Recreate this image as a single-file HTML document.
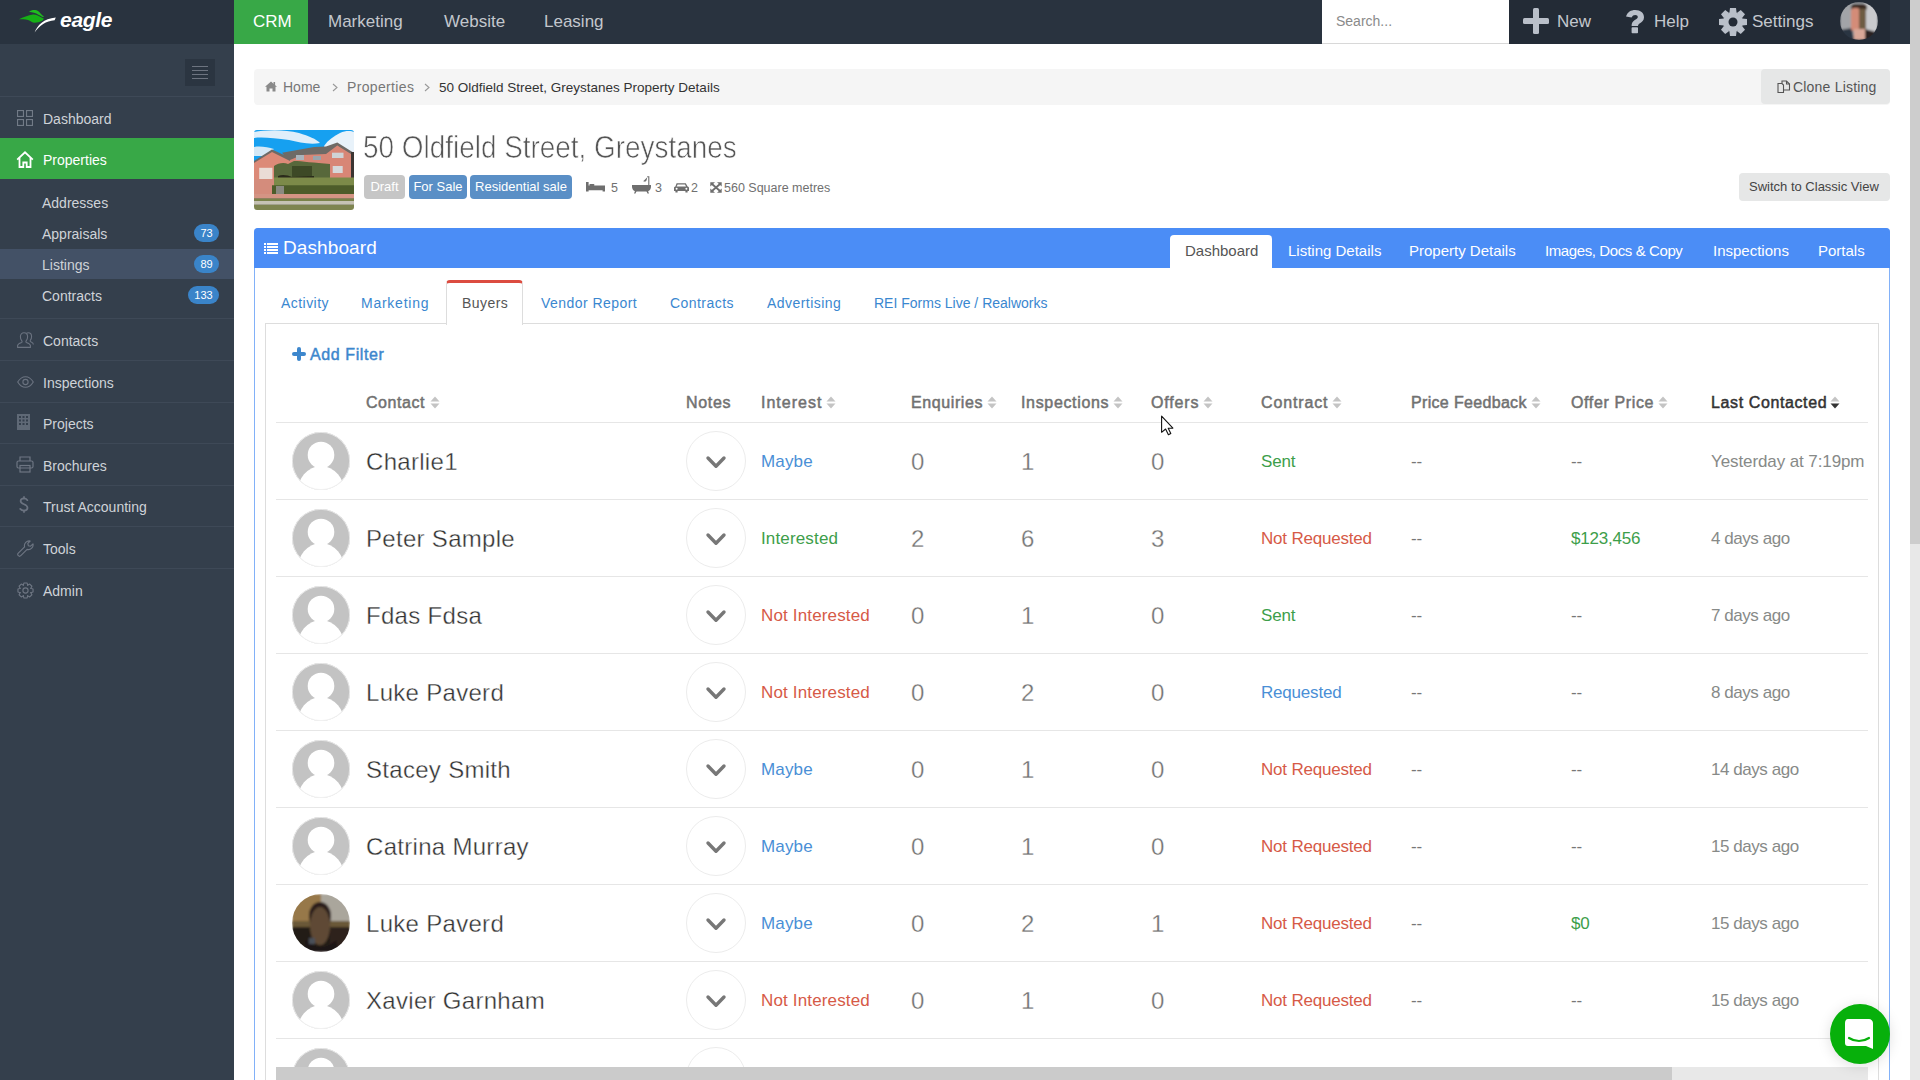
<!DOCTYPE html>
<html><head><meta charset="utf-8">
<style>
*{box-sizing:border-box;margin:0;padding:0}
html,body{width:1920px;height:1080px;overflow:hidden;background:#fff;font-family:"Liberation Sans",sans-serif;}
.a{position:absolute;white-space:nowrap}
.tnav{position:absolute;top:0;height:44px;line-height:44px;font-size:17px;color:#c3c7cd;white-space:nowrap}
.sitem{position:absolute;margin-top:1.5px;left:43px;font-size:14px;color:#cfd3d8;white-space:nowrap;line-height:16px}
.sub{left:42px}
.sep{position:absolute;left:0;width:234px;height:1px;background:#3e4957}
.badge{position:absolute;height:18px;border-radius:9px;background:#3a84c9;color:#fff;font-size:11px;line-height:18px;text-align:center}
.ico{position:absolute;left:17px}

/*X*/
.bc{font-size:14px;line-height:17px}
.lbl{top:175px;height:24px;border-radius:4px;color:#fff;font-size:13px;line-height:24px;text-align:center}
.meta{top:181px;font-size:12.5px;color:#707070;line-height:14px}
.ptab{top:242px;font-size:15px;color:#fff;line-height:18px}
.stab{top:295px;font-size:14px;color:#3a87d0;line-height:17px;letter-spacing:0.45px}
.th{top:393px;font-size:16px;line-height:19px;letter-spacing:0.5px;-webkit-text-stroke:0.5px currentColor}
.nm{font-size:24px;color:#333;line-height:28px;letter-spacing:0.3px;-webkit-text-stroke:0.35px #fff}
.num{font-size:24px;color:#737373;line-height:28px;-webkit-text-stroke:0.3px #fff}
.tx{font-size:17px;line-height:20px;letter-spacing:-0.2px}
</style></head><body>
<!-- TOP BAR -->
<div class="a" style="left:0;top:0;width:1910px;height:44px;background:#29333f"></div>
<svg class="a" style="left:15px;top:6px" width="44" height="30" viewBox="0 0 44 30">
  <path d="M4 13.2 C8 11.5 13 9 18 8.5 C21 8.2 24 10 26.5 11.5 L29 12.8 L27.5 14.5 C25 15.8 22 16.8 19.5 16.8 C17.5 16.8 15.5 15 13 14 C10 13 6 13.5 4 13.2 Z" fill="#16b016"/>
  <path d="M14 5.5 C16 4 19 3.6 21.5 4.2 C23.5 4.8 25.5 7.5 27.5 9.5 L29.2 10.5 L27.5 11 C25 9.5 22 7.8 19 6.8 C17.5 6.3 15.5 6.2 14 5.5 Z" fill="#1fbd1f"/>
  <path d="M19.6 26.5 C22.5 19.5 28.5 12.6 40.8 11.6 L39.6 14.3 C31 14.8 24.5 19.8 19.6 26.5 Z" fill="#fff"/>
</svg>
<div class="a" style="left:60px;top:7px;font-size:21px;font-weight:bold;font-style:italic;color:#fff;line-height:26px;letter-spacing:-0.3px">eagle</div>

<div class="a" style="left:234px;top:0;width:74px;height:44px;background:#38a847"></div>
<div class="tnav" style="left:253px;color:#fff">CRM</div>
<div class="tnav" style="left:328px">Marketing</div>
<div class="tnav" style="left:444px">Website</div>
<div class="tnav" style="left:544px">Leasing</div>

<div class="a" style="left:1322px;top:0;width:187px;height:44px;background:#fff;border-bottom:1px solid #d8d8d8"></div>
<div class="a" style="left:1336px;top:0;height:43px;line-height:42px;font-size:14px;color:#8a8a8a">Search...</div>
<div class="a" style="left:1509px;top:0;width:381px;height:44px;background:#232b36"></div>
<!-- plus -->
<div class="a" style="left:1523px;top:18px;width:26px;height:6px;background:#b9bfc9;border-radius:1.5px"></div>
<div class="a" style="left:1533px;top:8px;width:6px;height:26px;background:#b9bfc9;border-radius:1.5px"></div>
<div class="tnav" style="left:1557px">New</div>
<svg class="a" style="left:1626px;top:10px" width="18" height="24" viewBox="0 0 18 24" fill="#b9bfc9"><path d="M0 6.5 C1.5 2 5 0 9.2 0 C14.5 0 18 3 18 7.2 C18 10.5 15.8 12 14 13.2 C12.8 14 12 14.6 12 16 H5.6 C5.6 13 6.5 11.5 8.8 10 C10.8 8.7 11.8 8.2 11.8 7 C11.8 5.8 10.8 5 9.2 5 C7.6 5 6.5 5.8 5.5 7.6 Z"/><rect x="5.6" y="17.2" width="6.4" height="6" rx="0.8"/></svg>
<div class="tnav" style="left:1654px">Help</div>
<svg class="a" style="left:1718px;top:7px" width="30" height="30" viewBox="0 0 30 30">
  <g fill="#b9bfc9" transform="translate(15 15)">
    <circle r="10"/>
    <path transform="rotate(0)" d="M-3.6 -9 L-3 -14 H3 L3.6 -9 Z"/><path transform="rotate(45)" d="M-3.6 -9 L-3 -14 H3 L3.6 -9 Z"/><path transform="rotate(90)" d="M-3.6 -9 L-3 -14 H3 L3.6 -9 Z"/><path transform="rotate(135)" d="M-3.6 -9 L-3 -14 H3 L3.6 -9 Z"/><path transform="rotate(180)" d="M-3.6 -9 L-3 -14 H3 L3.6 -9 Z"/><path transform="rotate(225)" d="M-3.6 -9 L-3 -14 H3 L3.6 -9 Z"/><path transform="rotate(270)" d="M-3.6 -9 L-3 -14 H3 L3.6 -9 Z"/><path transform="rotate(315)" d="M-3.6 -9 L-3 -14 H3 L3.6 -9 Z"/>
  </g>
  <circle cx="15" cy="15" r="4.5" fill="#232b36"/>
</svg>
<div class="tnav" style="left:1752px">Settings</div>
<svg class="a" style="left:1840px;top:2px" width="38" height="38" viewBox="0 0 38 38">
  <defs><clipPath id="av"><circle cx="19" cy="19" r="19"/></clipPath><filter id="bl1" x="-10%" y="-10%" width="120%" height="120%"><feGaussianBlur stdDeviation="0.9"/></filter></defs>
  <g clip-path="url(#av)"><g filter="url(#bl1)">
    <rect width="38" height="38" fill="#a2a4a8"/>
    <rect x="24" y="0" width="14" height="30" fill="#c9cacd"/>
    <path d="M0 28 L12 26 L14 38 H0 Z" fill="#2c3542"/>
    <path d="M25 27 L36 30 L38 38 H24 Z" fill="#2a2224"/>
    <rect x="11" y="2" width="16" height="7" rx="4" fill="#3a2a22"/>
    <rect x="11" y="6" width="9" height="23" rx="3" fill="#d48c78"/>
    <rect x="19" y="7" width="7" height="21" fill="#6e5c42"/>
    <rect x="14" y="27" width="11" height="11" fill="#d9a898"/>
  </g></g>
</svg>

<!-- SIDEBAR -->
<div class="a" style="left:0;top:44px;width:234px;height:1036px;background:#343f4c"></div>
<div class="a" style="left:185px;top:59px;width:30px;height:27px;background:#2b3541"></div>
<div class="a" style="left:192px;top:66px;width:16px;height:1px;background:#6d7480"></div>
<div class="a" style="left:192px;top:70px;width:16px;height:1px;background:#6d7480"></div>
<div class="a" style="left:192px;top:74px;width:16px;height:1px;background:#6d7480"></div>
<div class="a" style="left:192px;top:78px;width:16px;height:1px;background:#6d7480"></div>
<div class="sep" style="top:96px"></div>

<!-- dashboard icon -->
<svg class="a" style="left:17px;top:110px" width="16" height="16" viewBox="0 0 16 16" fill="none" stroke="#727b87" stroke-width="1.1">
  <rect x="0.55" y="0.55" width="5.9" height="5.9"/><rect x="9.55" y="0.55" width="5.9" height="5.9"/>
  <rect x="0.55" y="9.55" width="5.9" height="5.9"/><rect x="9.55" y="9.55" width="5.9" height="5.9"/>
</svg>
<div class="sitem" style="top:109px">Dashboard</div>

<div class="a" style="left:0;top:138px;width:234px;height:41px;background:#38a847"></div>
<svg class="a" style="left:16px;top:151px" width="18" height="17" viewBox="0 0 18 17" fill="none" stroke="#fff" stroke-width="1.8" stroke-linejoin="miter">
  <path d="M1.2 8.6 L9 1.3 L16.8 8.6"/><path d="M3.5 6.8 V16 H7.3 V11.5 H10.7 V16 H14.5 V6.8"/>
</svg>
<div class="sitem" style="top:150px;color:#fff">Properties</div>

<div class="sitem sub" style="top:193px">Addresses</div>
<div class="sitem sub" style="top:224px">Appraisals</div>
<div class="badge" style="left:194px;top:224px;width:25px">73</div>
<div class="a" style="left:0;top:249px;width:234px;height:30px;background:#435166"></div>
<div class="sitem sub" style="top:255px">Listings</div>
<div class="badge" style="left:194px;top:255px;width:25px">89</div>
<div class="sitem sub" style="top:286px">Contracts</div>
<div class="badge" style="left:188px;top:286px;width:31px">133</div>
<div class="sep" style="top:318px"></div>

<!-- contacts -->
<svg class="a" style="left:17px;top:332px" width="17" height="16" viewBox="0 0 17 16" fill="none" stroke="#6b7380" stroke-width="1.1" stroke-linejoin="round">
  <path d="M0.6 15.4 V13.6 C0.6 12 2.5 11.2 4.6 10.4 C5.2 10.1 5.2 9.3 4.7 8.6 C3.8 7.6 3.4 6.2 3.4 4.8 C3.4 2.3 5 0.7 7 0.7 C9 0.7 10.6 2.3 10.6 4.8 C10.6 6.2 10.2 7.6 9.3 8.6 C8.8 9.3 8.8 10.1 9.4 10.4 C11.5 11.2 13.4 12 13.4 13.6 V15.4 Z"/>
  <path d="M9.5 1.2 C10 0.9 10.6 0.7 11.2 0.7 C13.2 0.7 14.6 2.3 14.6 4.6 C14.6 6 14.2 7.2 13.4 8.2 C13 8.8 13.2 9.5 13.8 9.8 C15.4 10.5 16.4 11.2 16.4 12.6"/>
</svg>
<div class="sitem" style="top:331px">Contacts</div>
<div class="sep" style="top:360px"></div>
<svg class="a" style="left:17px;top:376px" width="17" height="12" viewBox="0 0 17 12" fill="none" stroke="#6b7380" stroke-width="1.1">
  <path d="M0.7 6 C3 2.2 5.6 0.7 8.5 0.7 C11.4 0.7 14 2.2 16.3 6 C14 9.8 11.4 11.3 8.5 11.3 C5.6 11.3 3 9.8 0.7 6 Z"/><circle cx="8.5" cy="6" r="2.6"/>
</svg>
<div class="sitem" style="top:373px">Inspections</div>
<div class="sep" style="top:402px"></div>
<svg class="a" style="left:17px;top:414px" width="13" height="16" viewBox="0 0 13 16">
  <rect x="0" y="0" width="13" height="16" fill="#5f6976"/>
  <g fill="#343f4c"><rect x="2" y="2" width="2" height="2"/><rect x="5.5" y="2" width="2" height="2"/><rect x="9" y="2" width="2" height="2"/>
  <rect x="2" y="5.5" width="2" height="2"/><rect x="5.5" y="5.5" width="2" height="2"/><rect x="9" y="5.5" width="2" height="2"/>
  <rect x="2" y="9" width="2" height="2"/><rect x="5.5" y="9" width="2" height="2"/><rect x="9" y="9" width="2" height="2"/></g>
</svg>
<div class="sitem" style="top:414px">Projects</div>
<div class="sep" style="top:443px"></div>
<svg class="a" style="left:16px;top:456px" width="18" height="17" viewBox="0 0 18 17" fill="none" stroke="#6e7683" stroke-width="1.2">
  <path d="M4 5 V1 H14 V5"/><rect x="1" y="5" width="16" height="7" rx="1.5"/><rect x="4" y="9.5" width="10" height="6.5"/>
</svg>
<div class="sitem" style="top:456px">Brochures</div>
<div class="sep" style="top:485px"></div>
<svg class="a" style="left:19px;top:496px" width="10" height="17" viewBox="0 0 10 17" fill="none" stroke="#6b7380" stroke-width="1.7" stroke-linecap="round"><path d="M8.4 4.2 C7.5 3 6.4 2.4 5 2.4 C3 2.4 1.6 3.4 1.6 5.1 C1.6 6.9 3.1 7.6 5 8.3 C7 9.1 8.5 9.8 8.5 11.8 C8.5 13.5 7 14.6 5 14.6 C3.4 14.6 2.1 14 1.2 12.9"/><path d="M5 0.9 V2.4 M5 14.6 V16.1"/></svg>
<div class="sitem" style="top:497px">Trust Accounting</div>
<div class="sep" style="top:526px"></div>
<svg class="a" style="left:17px;top:540px" width="17" height="17" viewBox="0 0 17 17" fill="none" stroke="#6e7683" stroke-width="1.1" stroke-linejoin="round">
  <path d="M1.3 13.2 L7.6 6.9 C7.2 5.5 7.5 3.6 8.8 2.3 C10 1.1 11.7 0.7 13.2 1 L10.8 3.4 L11.3 5.7 L13.6 6.2 L16 3.8 C16.3 5.3 15.9 7 14.7 8.2 C13.4 9.5 11.5 9.8 10.1 9.4 L3.8 15.7 C3.1 16.4 2 16.4 1.3 15.7 C0.6 15 0.6 13.9 1.3 13.2 Z"/>
</svg>
<div class="sitem" style="top:539px">Tools</div>
<div class="sep" style="top:568px"></div>
<svg class="a" style="left:17px;top:582px" width="17" height="17" viewBox="-8.5 -8.5 17 17" fill="none" stroke="#6e7683" stroke-width="1.1" stroke-linejoin="round">
  <circle r="2.6"/><path d="M-2.28 -5.11 L-1.53 -7.55 L1.53 -7.55 L2.28 -5.11 L2.00 -5.23 L4.25 -6.42 L6.42 -4.25 L5.23 -2.00 L5.11 -2.28 L7.55 -1.53 L7.55 1.53 L5.11 2.28 L5.23 2.00 L6.42 4.25 L4.25 6.42 L2.00 5.23 L2.28 5.11 L1.53 7.55 L-1.53 7.55 L-2.28 5.11 L-2.00 5.23 L-4.25 6.42 L-6.42 4.25 L-5.23 2.00 L-5.11 2.28 L-7.55 1.53 L-7.55 -1.53 L-5.11 -2.28 L-5.23 -2.00 L-6.42 -4.25 L-4.25 -6.42 L-2.00 -5.23 Z"/>
</svg>
<div class="sitem" style="top:581px">Admin</div>


<!-- MAIN -->
<!-- breadcrumb -->
<div class="a" style="left:254px;top:69px;width:1636px;height:36px;background:#f5f5f5;border-radius:4px"></div>
<svg class="a" style="left:265px;top:81px" width="12" height="11" viewBox="0 0 12 11"><path d="M6 0.5 L0 5.8 L1.5 5.8 L1.5 10.5 L4.5 10.5 L4.5 7.5 L7.5 7.5 L7.5 10.5 L10.5 10.5 L10.5 5.8 L12 5.8 Z" fill="#8a8a8a"/><rect x="8.5" y="1" width="1.6" height="3" fill="#8a8a8a"/></svg>
<div class="a bc" style="left:283px;top:79px;color:#777">Home</div>
<svg class="a" style="left:332px;top:83px" width="6" height="9" viewBox="0 0 6 9"><path d="M1 1 L5 4.5 L1 8" fill="none" stroke="#999" stroke-width="1.1"/></svg>
<div class="a bc" style="left:347px;top:79px;color:#777;letter-spacing:0.35px">Properties</div>
<svg class="a" style="left:424px;top:83px" width="6" height="9" viewBox="0 0 6 9"><path d="M1 1 L5 4.5 L1 8" fill="none" stroke="#999" stroke-width="1.1"/></svg>
<div class="a bc" style="left:439px;top:79px;color:#333;font-size:13.5px">50 Oldfield Street, Greystanes Property Details</div>
<div class="a" style="left:1761px;top:69px;width:129px;height:35px;background:#e6e7e7;border-radius:4px"></div>
<svg class="a" style="left:1777px;top:80px" width="14" height="14" viewBox="0 0 14 14" fill="none" stroke="#555" stroke-width="1.1"><path d="M1 3.5 H5 L6.5 5 V12.5 H1 Z"/><path d="M5 3.5 V1 H9.5 L12.5 4 V10 H6.5"/><path d="M9.5 1 V4 H12.5"/></svg>
<div class="a" style="left:1793px;top:79px;font-size:14px;color:#555;line-height:17px;letter-spacing:0.2px">Clone Listing</div>

<!-- property header -->
<svg class="a" style="left:254px;top:130px" width="100" height="80" viewBox="0 0 100 80">
  <defs><clipPath id="ph"><rect width="100" height="80" rx="3"/></clipPath><filter id="bl3" x="-5%" y="-5%" width="110%" height="110%"><feGaussianBlur stdDeviation="0.5"/></filter></defs>
  <g clip-path="url(#ph)"><g filter="url(#bl3)">
  <rect width="100" height="80" fill="#16a0f0"/>
  <path d="M0 2 C10 0 30 -1 45 3 C55 6 62 9 66 13 C55 15 45 12 35 10 C20 8 8 7 0 8 Z" fill="#dfeefa"/>
  <path d="M70 16 C74 10 80 6 86 3 C92 0 98 1 100 2 V25 H72 Z" fill="#e8f2fa"/>
  <path d="M0 17 C6 16 14 17 20 19 L10 26 H0 Z" fill="#d4e8f6"/>
  <path d="M0 31 L18 19.6 L30 25 L28 22.7 L60 17 L72 16.5 L83.3 12.6 L100 23 V80 H0 Z" fill="#6e6a66"/>
  <path d="M0 33 L18 22 L40 33 V60 H0 Z" fill="#dc8a78"/>
  <path d="M36 30 L48 25 L72 24 L83.3 15.5 L97 24 V60 H36 Z" fill="#d88676"/>
  <rect x="97" y="22" width="3" height="40" fill="#3a3530"/>
  <rect x="78" y="22.7" width="11.5" height="5.3" fill="#cfd3d6"/>
  <rect x="78.7" y="36" width="10" height="7" fill="#d6d8da"/>
  <rect x="42" y="25" width="8" height="5" fill="#aab4bc"/>
  <rect x="59" y="26" width="8" height="4" fill="#9aa4ac"/>
  <rect x="5.2" y="37.8" width="13.2" height="11.2" fill="#eadcd6"/>
  <path d="M20 36 C24 33 30 32 34 34 L40 31 C48 31 60 33 76 34 L76 48 H20 Z" fill="#58683a"/>
  <path d="M38 36 H58 V48 H38 Z" fill="#3e4a26"/>
  <path d="M24 46 C28 44 34 45 38 47 L60 46 V50 H24 Z" fill="#2a2a1a"/>
  <path d="M20 47.6 H100 V57 H20 Z" fill="#7c8a4a"/>
  <path d="M0 49 H20 V64 H0 Z" fill="#d48c7c"/>
  <path d="M18 55.3 H100 V64 H18 Z" fill="#4e5c2a"/>
  <rect x="22" y="56" width="8" height="8" fill="#8a8a80"/>
  <path d="M0 64 H100 V68.6 H0 Z" fill="#d49484"/>
  <path d="M0 68.6 H100 V71 H0 Z" fill="#7a8248"/>
  <path d="M0 71 H100 V74.8 H0 Z" fill="#c6c2b4"/>
  <path d="M0 74.8 H100 V80 H0 Z" fill="#7e8450"/>
  </g>
</svg>
<div class="a" style="left:363px;top:128px;font-size:32px;color:#555;line-height:38px;letter-spacing:0px;transform:scaleX(0.872);transform-origin:0 0;-webkit-text-stroke:0.7px #fff">50 Oldfield Street, Greystanes</div>
<div class="a lbl" style="left:364px;width:41px;background:#c6c6c6">Draft</div>
<div class="a lbl" style="left:409px;width:58px;background:#5a8fc6">For Sale</div>
<div class="a lbl" style="left:470px;width:102px;background:#5a8fc6">Residential sale</div>
<!-- bed -->
<svg class="a" style="left:586px;top:182px" width="19" height="10" viewBox="0 0 19 10" fill="#6e6e6e"><path d="M0 0 H2.6 V3.6 H19 V9.6 H16.6 V8.2 H2.6 V9.6 H0 Z"/><rect x="3.4" y="2" width="5" height="2" rx="0.8"/></svg>
<div class="a meta" style="left:611px">5</div>
<svg class="a" style="left:632px;top:176px" width="20" height="18" viewBox="0 0 20 18" fill="#6e6e6e"><path d="M0 9 H19 V10.5 C19 13.5 17 15.5 14 15.5 H5 C2 15.5 0 13.5 0 10.5 Z"/><path d="M3 15 L2 17.5 H3.5 L4.6 15 Z M16 15 L17 17.5 H15.5 L14.4 15 Z"/><path d="M16.8 9 V0.8 H15.2" fill="none" stroke="#6e6e6e" stroke-width="1.1"/><path d="M15.3 1.2 L11.2 5.3 L13.2 5.8 L14.5 4.5 Z"/></svg>
<div class="a meta" style="left:655px">3</div>
<svg class="a" style="left:674px;top:183px" width="15" height="10" viewBox="0 0 15 10" fill="#6e6e6e"><path d="M2.6 0.3 H11.8 L13.6 3.6 C14.5 3.8 15 4.4 15 5.2 V8 H13.6 V9.6 H11.4 V8 H3.6 V9.6 H1.4 V8 H0 V5.2 C0 4.4 0.5 3.8 1.4 3.6 Z"/><path d="M3.6 1.6 H11 L12 3.6 H2.6 Z" fill="#fff"/><circle cx="2.6" cy="5.8" r="1" fill="#fff"/><circle cx="12.4" cy="5.8" r="1" fill="#fff"/></svg>
<div class="a meta" style="left:691px">2</div>
<svg class="a" style="left:710px;top:182px" width="12" height="11" viewBox="0 0 12 11" fill="#6e6e6e"><path d="M2 2 L10 9 M10 2 L2 9" stroke="#6e6e6e" stroke-width="1.8"/><path d="M0.3 0.3 H5 L0.3 4.5 Z M11.7 0.3 H7 L11.7 4.5 Z M0.3 10.7 H5 L0.3 6.5 Z M11.7 10.7 H7 L11.7 6.5 Z"/></svg>
<div class="a meta" style="left:724px">560 Square metres</div>
<div class="a" style="left:1739px;top:173px;width:151px;height:28px;background:#e6e7e7;border-radius:4px"></div>
<div class="a" style="left:1749px;top:179px;font-size:13px;color:#444;line-height:16px">Switch to Classic View</div><path d="M0 74.8 H100 V80 H0Z" fill="#7e8450"/>
  </g>
<!-- dashboard panel -->
<div class="a" style="left:254px;top:228px;width:1636px;height:860px;border:1px solid #82b1f8;border-radius:4px 4px 0 0"></div>
<div class="a" style="left:254px;top:228px;width:1636px;height:40px;background:#4b8df6;border-radius:4px 4px 0 0"></div>
<svg class="a" style="left:264px;top:243px" width="14" height="11" viewBox="0 0 14 11" fill="#fff"><rect x="0" y="0" width="2" height="2"/><rect x="3" y="0" width="11" height="2"/><rect x="0" y="3" width="2" height="2"/><rect x="3" y="3" width="11" height="2"/><rect x="0" y="6" width="2" height="2"/><rect x="3" y="6" width="11" height="2"/><rect x="0" y="9" width="2" height="2"/><rect x="3" y="9" width="11" height="2"/></svg>
<div class="a" style="left:283px;top:237px;font-size:19px;color:#fff;line-height:22px;letter-spacing:0.1px">Dashboard</div>
<div class="a" style="left:1170px;top:235px;width:102px;height:33px;background:#fff;border-radius:4px 4px 0 0"></div>
<div class="a ptab" style="left:1185px;color:#555">Dashboard</div>
<div class="a ptab" style="left:1288px">Listing Details</div>
<div class="a ptab" style="left:1409px">Property Details</div>
<div class="a ptab" style="left:1545px;letter-spacing:-0.4px">Images, Docs &amp; Copy</div>
<div class="a ptab" style="left:1713px">Inspections</div>
<div class="a ptab" style="left:1818px">Portals</div>

<!-- sub tabs -->
<div class="a" style="left:265px;top:323px;width:1614px;height:800px;border:1px solid #ddd"></div>
<div class="a" style="left:446px;top:280px;width:77px;height:45px;background:#fff;border:1px solid #ddd;border-bottom:none;border-top:3px solid #dc4c40;border-radius:4px 4px 0 0"></div>
<div class="a stab" style="left:281px">Activity</div>
<div class="a stab" style="left:361px;letter-spacing:0.75px">Marketing</div>
<div class="a stab" style="left:462px;color:#555">Buyers</div>
<div class="a stab" style="left:541px">Vendor Report</div>
<div class="a stab" style="left:670px">Contracts</div>
<div class="a stab" style="left:767px">Advertising</div>
<div class="a stab" style="left:874px;letter-spacing:0">REI Forms Live / Realworks</div>

<!-- add filter -->
<div class="a" style="left:292px;top:352px;width:14px;height:4px;background:#3d87cd;border-radius:2px"></div>
<div class="a" style="left:297px;top:347px;width:4px;height:14px;background:#3d87cd;border-radius:2px"></div>
<div class="a" style="left:310px;top:345px;font-size:16px;color:#3d87cd;line-height:19px;letter-spacing:0.6px;-webkit-text-stroke:0.45px #3d87cd">Add Filter</div>
<div class="a th" style="left:366px;color:#717171;letter-spacing:0.56px">Contact</div>
<svg class="a" style="left:430px;top:396px" width="10" height="13" viewBox="0 0 10 13"><path d="M5 0.5 L9.5 5.5 H0.5 Z" fill="#c4c4c4"/><path d="M0.5 7.5 H9.5 L5 12.5 Z" fill="#c4c4c4"/></svg>
<div class="a th" style="left:686px;color:#717171;letter-spacing:0.68px">Notes</div>
<div class="a th" style="left:761px;color:#717171;letter-spacing:1.0px">Interest</div>
<svg class="a" style="left:826px;top:396px" width="10" height="13" viewBox="0 0 10 13"><path d="M5 0.5 L9.5 5.5 H0.5 Z" fill="#c4c4c4"/><path d="M0.5 7.5 H9.5 L5 12.5 Z" fill="#c4c4c4"/></svg>
<div class="a th" style="left:911px;color:#717171;letter-spacing:0.6px">Enquiries</div>
<svg class="a" style="left:987px;top:396px" width="10" height="13" viewBox="0 0 10 13"><path d="M5 0.5 L9.5 5.5 H0.5 Z" fill="#c4c4c4"/><path d="M0.5 7.5 H9.5 L5 12.5 Z" fill="#c4c4c4"/></svg>
<div class="a th" style="left:1021px;color:#717171;letter-spacing:0.66px">Inspections</div>
<svg class="a" style="left:1113px;top:396px" width="10" height="13" viewBox="0 0 10 13"><path d="M5 0.5 L9.5 5.5 H0.5 Z" fill="#c4c4c4"/><path d="M0.5 7.5 H9.5 L5 12.5 Z" fill="#c4c4c4"/></svg>
<div class="a th" style="left:1151px;color:#717171;letter-spacing:0.84px">Offers</div>
<svg class="a" style="left:1203px;top:396px" width="10" height="13" viewBox="0 0 10 13"><path d="M5 0.5 L9.5 5.5 H0.5 Z" fill="#c4c4c4"/><path d="M0.5 7.5 H9.5 L5 12.5 Z" fill="#c4c4c4"/></svg>
<div class="a th" style="left:1261px;color:#717171;letter-spacing:0.86px">Contract</div>
<svg class="a" style="left:1332px;top:396px" width="10" height="13" viewBox="0 0 10 13"><path d="M5 0.5 L9.5 5.5 H0.5 Z" fill="#c4c4c4"/><path d="M0.5 7.5 H9.5 L5 12.5 Z" fill="#c4c4c4"/></svg>
<div class="a th" style="left:1411px;color:#717171;letter-spacing:0.33px">Price Feedback</div>
<svg class="a" style="left:1531px;top:396px" width="10" height="13" viewBox="0 0 10 13"><path d="M5 0.5 L9.5 5.5 H0.5 Z" fill="#c4c4c4"/><path d="M0.5 7.5 H9.5 L5 12.5 Z" fill="#c4c4c4"/></svg>
<div class="a th" style="left:1571px;color:#717171;letter-spacing:0.63px">Offer Price</div>
<svg class="a" style="left:1658px;top:396px" width="10" height="13" viewBox="0 0 10 13"><path d="M5 0.5 L9.5 5.5 H0.5 Z" fill="#c4c4c4"/><path d="M0.5 7.5 H9.5 L5 12.5 Z" fill="#c4c4c4"/></svg>
<div class="a th" style="left:1711px;color:#333;letter-spacing:0.61px">Last Contacted</div>
<svg class="a" style="left:1830px;top:396px" width="10" height="13" viewBox="0 0 10 13"><path d="M5 0.5 L9.5 5.5 H0.5 Z" fill="#c4c4c4"/><path d="M0.5 7.5 H9.5 L5 12.5 Z" fill="#333"/></svg>
<div class="a" style="left:276px;top:422px;width:1592px;height:1px;background:#e6e6e6"></div>
<svg class="a" style="left:292px;top:432px" width="58" height="58" viewBox="0 0 58 58"><defs><clipPath id="ac"><circle cx="29" cy="29" r="29"/></clipPath></defs><circle cx="29" cy="29" r="29" fill="#c3c3c3"/><g clip-path="url(#ac)"><circle cx="29" cy="23" r="13.3" fill="#fff"/><ellipse cx="29" cy="62" rx="24" ry="28" fill="#fff"/></g><circle cx="29" cy="29" r="28.6" fill="none" stroke="#eee" stroke-width="0.8"/></svg>
<div class="a nm" style="left:366px;top:448px">Charlie1</div>
<div class="a" style="left:686px;top:431px;width:60px;height:60px;border:1px solid #ececec;border-radius:50%"></div>
<svg class="a" style="left:705px;top:455px" width="22" height="14" viewBox="0 0 22 14"><path d="M3 3 L11 11.2 L19 3" fill="none" stroke="#777" stroke-width="3.4" stroke-linecap="round" stroke-linejoin="round"/></svg>
<div class="a tx" style="left:761px;top:452px;color:#4a8fd6;letter-spacing:0.15px">Maybe</div>
<div class="a num" style="left:911px;top:448px">0</div>
<div class="a num" style="left:1021px;top:448px">1</div>
<div class="a num" style="left:1151px;top:448px">0</div>
<div class="a tx" style="left:1261px;top:452px;color:#3d9e4a">Sent</div>
<div class="a tx" style="left:1411px;top:452px;color:#777">--</div>
<div class="a tx" style="left:1571px;top:452px;color:#777">--</div>
<div class="a tx" style="left:1711px;top:452px;color:#878a88;letter-spacing:-0.1px">Yesterday at 7:19pm</div>
<div class="a" style="left:276px;top:499px;width:1592px;height:1px;background:#e6e6e6"></div>
<svg class="a" style="left:292px;top:509px" width="58" height="58" viewBox="0 0 58 58"><defs><clipPath id="ac"><circle cx="29" cy="29" r="29"/></clipPath></defs><circle cx="29" cy="29" r="29" fill="#c3c3c3"/><g clip-path="url(#ac)"><circle cx="29" cy="23" r="13.3" fill="#fff"/><ellipse cx="29" cy="62" rx="24" ry="28" fill="#fff"/></g><circle cx="29" cy="29" r="28.6" fill="none" stroke="#eee" stroke-width="0.8"/></svg>
<div class="a nm" style="left:366px;top:525px">Peter Sample</div>
<div class="a" style="left:686px;top:508px;width:60px;height:60px;border:1px solid #ececec;border-radius:50%"></div>
<svg class="a" style="left:705px;top:532px" width="22" height="14" viewBox="0 0 22 14"><path d="M3 3 L11 11.2 L19 3" fill="none" stroke="#777" stroke-width="3.4" stroke-linecap="round" stroke-linejoin="round"/></svg>
<div class="a tx" style="left:761px;top:529px;color:#3d9e4a;letter-spacing:0.15px">Interested</div>
<div class="a num" style="left:911px;top:525px">2</div>
<div class="a num" style="left:1021px;top:525px">6</div>
<div class="a num" style="left:1151px;top:525px">3</div>
<div class="a tx" style="left:1261px;top:529px;color:#d65a47">Not Requested</div>
<div class="a tx" style="left:1411px;top:529px;color:#777">--</div>
<div class="a tx" style="left:1571px;top:529px;color:#3d9e4a">$123,456</div>
<div class="a tx" style="left:1711px;top:529px;color:#878a88;letter-spacing:-0.45px">4 days ago</div>
<div class="a" style="left:276px;top:576px;width:1592px;height:1px;background:#e6e6e6"></div>
<svg class="a" style="left:292px;top:586px" width="58" height="58" viewBox="0 0 58 58"><defs><clipPath id="ac"><circle cx="29" cy="29" r="29"/></clipPath></defs><circle cx="29" cy="29" r="29" fill="#c3c3c3"/><g clip-path="url(#ac)"><circle cx="29" cy="23" r="13.3" fill="#fff"/><ellipse cx="29" cy="62" rx="24" ry="28" fill="#fff"/></g><circle cx="29" cy="29" r="28.6" fill="none" stroke="#eee" stroke-width="0.8"/></svg>
<div class="a nm" style="left:366px;top:602px">Fdas Fdsa</div>
<div class="a" style="left:686px;top:585px;width:60px;height:60px;border:1px solid #ececec;border-radius:50%"></div>
<svg class="a" style="left:705px;top:609px" width="22" height="14" viewBox="0 0 22 14"><path d="M3 3 L11 11.2 L19 3" fill="none" stroke="#777" stroke-width="3.4" stroke-linecap="round" stroke-linejoin="round"/></svg>
<div class="a tx" style="left:761px;top:606px;color:#d65a47;letter-spacing:0.15px">Not Interested</div>
<div class="a num" style="left:911px;top:602px">0</div>
<div class="a num" style="left:1021px;top:602px">1</div>
<div class="a num" style="left:1151px;top:602px">0</div>
<div class="a tx" style="left:1261px;top:606px;color:#3d9e4a">Sent</div>
<div class="a tx" style="left:1411px;top:606px;color:#777">--</div>
<div class="a tx" style="left:1571px;top:606px;color:#777">--</div>
<div class="a tx" style="left:1711px;top:606px;color:#878a88;letter-spacing:-0.45px">7 days ago</div>
<div class="a" style="left:276px;top:653px;width:1592px;height:1px;background:#e6e6e6"></div>
<svg class="a" style="left:292px;top:663px" width="58" height="58" viewBox="0 0 58 58"><defs><clipPath id="ac"><circle cx="29" cy="29" r="29"/></clipPath></defs><circle cx="29" cy="29" r="29" fill="#c3c3c3"/><g clip-path="url(#ac)"><circle cx="29" cy="23" r="13.3" fill="#fff"/><ellipse cx="29" cy="62" rx="24" ry="28" fill="#fff"/></g><circle cx="29" cy="29" r="28.6" fill="none" stroke="#eee" stroke-width="0.8"/></svg>
<div class="a nm" style="left:366px;top:679px">Luke Paverd</div>
<div class="a" style="left:686px;top:662px;width:60px;height:60px;border:1px solid #ececec;border-radius:50%"></div>
<svg class="a" style="left:705px;top:686px" width="22" height="14" viewBox="0 0 22 14"><path d="M3 3 L11 11.2 L19 3" fill="none" stroke="#777" stroke-width="3.4" stroke-linecap="round" stroke-linejoin="round"/></svg>
<div class="a tx" style="left:761px;top:683px;color:#d65a47;letter-spacing:0.15px">Not Interested</div>
<div class="a num" style="left:911px;top:679px">0</div>
<div class="a num" style="left:1021px;top:679px">2</div>
<div class="a num" style="left:1151px;top:679px">0</div>
<div class="a tx" style="left:1261px;top:683px;color:#4a8fd6">Requested</div>
<div class="a tx" style="left:1411px;top:683px;color:#777">--</div>
<div class="a tx" style="left:1571px;top:683px;color:#777">--</div>
<div class="a tx" style="left:1711px;top:683px;color:#878a88;letter-spacing:-0.45px">8 days ago</div>
<div class="a" style="left:276px;top:730px;width:1592px;height:1px;background:#e6e6e6"></div>
<svg class="a" style="left:292px;top:740px" width="58" height="58" viewBox="0 0 58 58"><defs><clipPath id="ac"><circle cx="29" cy="29" r="29"/></clipPath></defs><circle cx="29" cy="29" r="29" fill="#c3c3c3"/><g clip-path="url(#ac)"><circle cx="29" cy="23" r="13.3" fill="#fff"/><ellipse cx="29" cy="62" rx="24" ry="28" fill="#fff"/></g><circle cx="29" cy="29" r="28.6" fill="none" stroke="#eee" stroke-width="0.8"/></svg>
<div class="a nm" style="left:366px;top:756px">Stacey Smith</div>
<div class="a" style="left:686px;top:739px;width:60px;height:60px;border:1px solid #ececec;border-radius:50%"></div>
<svg class="a" style="left:705px;top:763px" width="22" height="14" viewBox="0 0 22 14"><path d="M3 3 L11 11.2 L19 3" fill="none" stroke="#777" stroke-width="3.4" stroke-linecap="round" stroke-linejoin="round"/></svg>
<div class="a tx" style="left:761px;top:760px;color:#4a8fd6;letter-spacing:0.15px">Maybe</div>
<div class="a num" style="left:911px;top:756px">0</div>
<div class="a num" style="left:1021px;top:756px">1</div>
<div class="a num" style="left:1151px;top:756px">0</div>
<div class="a tx" style="left:1261px;top:760px;color:#d65a47">Not Requested</div>
<div class="a tx" style="left:1411px;top:760px;color:#777">--</div>
<div class="a tx" style="left:1571px;top:760px;color:#777">--</div>
<div class="a tx" style="left:1711px;top:760px;color:#878a88;letter-spacing:-0.45px">14 days ago</div>
<div class="a" style="left:276px;top:807px;width:1592px;height:1px;background:#e6e6e6"></div>
<svg class="a" style="left:292px;top:817px" width="58" height="58" viewBox="0 0 58 58"><defs><clipPath id="ac"><circle cx="29" cy="29" r="29"/></clipPath></defs><circle cx="29" cy="29" r="29" fill="#c3c3c3"/><g clip-path="url(#ac)"><circle cx="29" cy="23" r="13.3" fill="#fff"/><ellipse cx="29" cy="62" rx="24" ry="28" fill="#fff"/></g><circle cx="29" cy="29" r="28.6" fill="none" stroke="#eee" stroke-width="0.8"/></svg>
<div class="a nm" style="left:366px;top:833px">Catrina Murray</div>
<div class="a" style="left:686px;top:816px;width:60px;height:60px;border:1px solid #ececec;border-radius:50%"></div>
<svg class="a" style="left:705px;top:840px" width="22" height="14" viewBox="0 0 22 14"><path d="M3 3 L11 11.2 L19 3" fill="none" stroke="#777" stroke-width="3.4" stroke-linecap="round" stroke-linejoin="round"/></svg>
<div class="a tx" style="left:761px;top:837px;color:#4a8fd6;letter-spacing:0.15px">Maybe</div>
<div class="a num" style="left:911px;top:833px">0</div>
<div class="a num" style="left:1021px;top:833px">1</div>
<div class="a num" style="left:1151px;top:833px">0</div>
<div class="a tx" style="left:1261px;top:837px;color:#d65a47">Not Requested</div>
<div class="a tx" style="left:1411px;top:837px;color:#777">--</div>
<div class="a tx" style="left:1571px;top:837px;color:#777">--</div>
<div class="a tx" style="left:1711px;top:837px;color:#878a88;letter-spacing:-0.45px">15 days ago</div>
<div class="a" style="left:276px;top:884px;width:1592px;height:1px;background:#e6e6e6"></div>
<svg class="a" style="left:292px;top:894px" width="58" height="58" viewBox="0 0 58 58"><defs><clipPath id="pc"><circle cx="29" cy="29" r="29"/></clipPath><filter id="bl2" x="-10%" y="-10%" width="120%" height="120%"><feGaussianBlur stdDeviation="1.2"/></filter></defs><g clip-path="url(#pc)"><g filter="url(#bl2)"><rect width="58" height="58" fill="#211a17"/><rect x="0" y="0" width="30" height="28" fill="#977848"/><rect x="29" y="0" width="29" height="29" fill="#aaa69c"/><rect x="0" y="27" width="58" height="6" fill="#6a5838"/><rect x="38" y="33" width="20" height="25" fill="#2e201c"/><ellipse cx="28" cy="22" rx="11" ry="14" fill="#2a1e1a"/><ellipse cx="28" cy="32" rx="10" ry="19" fill="#5e4a36"/><path d="M14 46 C18 50 24 54 29 54 C34 54 40 50 44 46 L46 58 H12 Z" fill="#1c1614"/><rect x="17" y="44" width="6" height="6" fill="#4a5058"/></g></g></svg>
<div class="a nm" style="left:366px;top:910px">Luke Paverd</div>
<div class="a" style="left:686px;top:893px;width:60px;height:60px;border:1px solid #ececec;border-radius:50%"></div>
<svg class="a" style="left:705px;top:917px" width="22" height="14" viewBox="0 0 22 14"><path d="M3 3 L11 11.2 L19 3" fill="none" stroke="#777" stroke-width="3.4" stroke-linecap="round" stroke-linejoin="round"/></svg>
<div class="a tx" style="left:761px;top:914px;color:#4a8fd6;letter-spacing:0.15px">Maybe</div>
<div class="a num" style="left:911px;top:910px">0</div>
<div class="a num" style="left:1021px;top:910px">2</div>
<div class="a num" style="left:1151px;top:910px">1</div>
<div class="a tx" style="left:1261px;top:914px;color:#d65a47">Not Requested</div>
<div class="a tx" style="left:1411px;top:914px;color:#777">--</div>
<div class="a tx" style="left:1571px;top:914px;color:#3d9e4a">$0</div>
<div class="a tx" style="left:1711px;top:914px;color:#878a88;letter-spacing:-0.45px">15 days ago</div>
<div class="a" style="left:276px;top:961px;width:1592px;height:1px;background:#e6e6e6"></div>
<svg class="a" style="left:292px;top:971px" width="58" height="58" viewBox="0 0 58 58"><defs><clipPath id="ac"><circle cx="29" cy="29" r="29"/></clipPath></defs><circle cx="29" cy="29" r="29" fill="#c3c3c3"/><g clip-path="url(#ac)"><circle cx="29" cy="23" r="13.3" fill="#fff"/><ellipse cx="29" cy="62" rx="24" ry="28" fill="#fff"/></g><circle cx="29" cy="29" r="28.6" fill="none" stroke="#eee" stroke-width="0.8"/></svg>
<div class="a nm" style="left:366px;top:987px">Xavier Garnham</div>
<div class="a" style="left:686px;top:970px;width:60px;height:60px;border:1px solid #ececec;border-radius:50%"></div>
<svg class="a" style="left:705px;top:994px" width="22" height="14" viewBox="0 0 22 14"><path d="M3 3 L11 11.2 L19 3" fill="none" stroke="#777" stroke-width="3.4" stroke-linecap="round" stroke-linejoin="round"/></svg>
<div class="a tx" style="left:761px;top:991px;color:#d65a47;letter-spacing:0.15px">Not Interested</div>
<div class="a num" style="left:911px;top:987px">0</div>
<div class="a num" style="left:1021px;top:987px">1</div>
<div class="a num" style="left:1151px;top:987px">0</div>
<div class="a tx" style="left:1261px;top:991px;color:#d65a47">Not Requested</div>
<div class="a tx" style="left:1411px;top:991px;color:#777">--</div>
<div class="a tx" style="left:1571px;top:991px;color:#777">--</div>
<div class="a tx" style="left:1711px;top:991px;color:#878a88;letter-spacing:-0.45px">15 days ago</div>
<div class="a" style="left:276px;top:1038px;width:1592px;height:1px;background:#e6e6e6"></div>
<svg class="a" style="left:292px;top:1048px" width="58" height="58" viewBox="0 0 58 58"><defs><clipPath id="ac"><circle cx="29" cy="29" r="29"/></clipPath></defs><circle cx="29" cy="29" r="29" fill="#c3c3c3"/><g clip-path="url(#ac)"><circle cx="29" cy="23" r="13.3" fill="#fff"/><ellipse cx="29" cy="62" rx="24" ry="28" fill="#fff"/></g><circle cx="29" cy="29" r="28.6" fill="none" stroke="#eee" stroke-width="0.8"/></svg>
<div class="a" style="left:686px;top:1047px;width:60px;height:60px;border:1px solid #ececec;border-radius:50%"></div>
<div class="a" style="left:266px;top:1067px;width:1612px;height:13px;background:#fff"></div>
<div class="a" style="left:276px;top:1067px;width:1592px;height:13px;background:#e8e8e8"></div>
<div class="a" style="left:276px;top:1067px;width:1396px;height:13px;background:#cbcbcb"></div>
<svg class="a" style="left:1160px;top:415px" width="15" height="22" viewBox="0 0 15 22"><path d="M1.6 1.2 L1.6 17.3 L5.6 14 L8.4 19.8 L10.8 18.4 L8.2 13.2 L12.9 13.1 Z" fill="#fff" stroke="#111" stroke-width="1.1" stroke-linejoin="round"/></svg>
<div class="a" style="left:1830px;top:1004px;width:60px;height:60px;border-radius:50%;background:#07b00b;box-shadow:0 2px 14px rgba(0,0,0,0.13)"></div>
<svg class="a" style="left:1844px;top:1018px" width="30" height="32" viewBox="0 0 30 32"><path d="M4 1 H25 C27 1 29 3 29 5 V31 L22 28 H4 C2 28 1 27 1 25 V5 C1 3 2 1 4 1 Z" fill="#fff"/><path d="M5 20 C11 24 19 24 25 20" fill="none" stroke="#07b00b" stroke-width="2.2" stroke-linecap="round"/></svg>
<!-- page scrollbar -->
<div class="a" style="left:1910px;top:0;width:10px;height:1080px;background:#e8e8e8"></div>
<div class="a" style="left:1910px;top:0;width:10px;height:544px;background:#cdcdcd"></div>
</body></html>
